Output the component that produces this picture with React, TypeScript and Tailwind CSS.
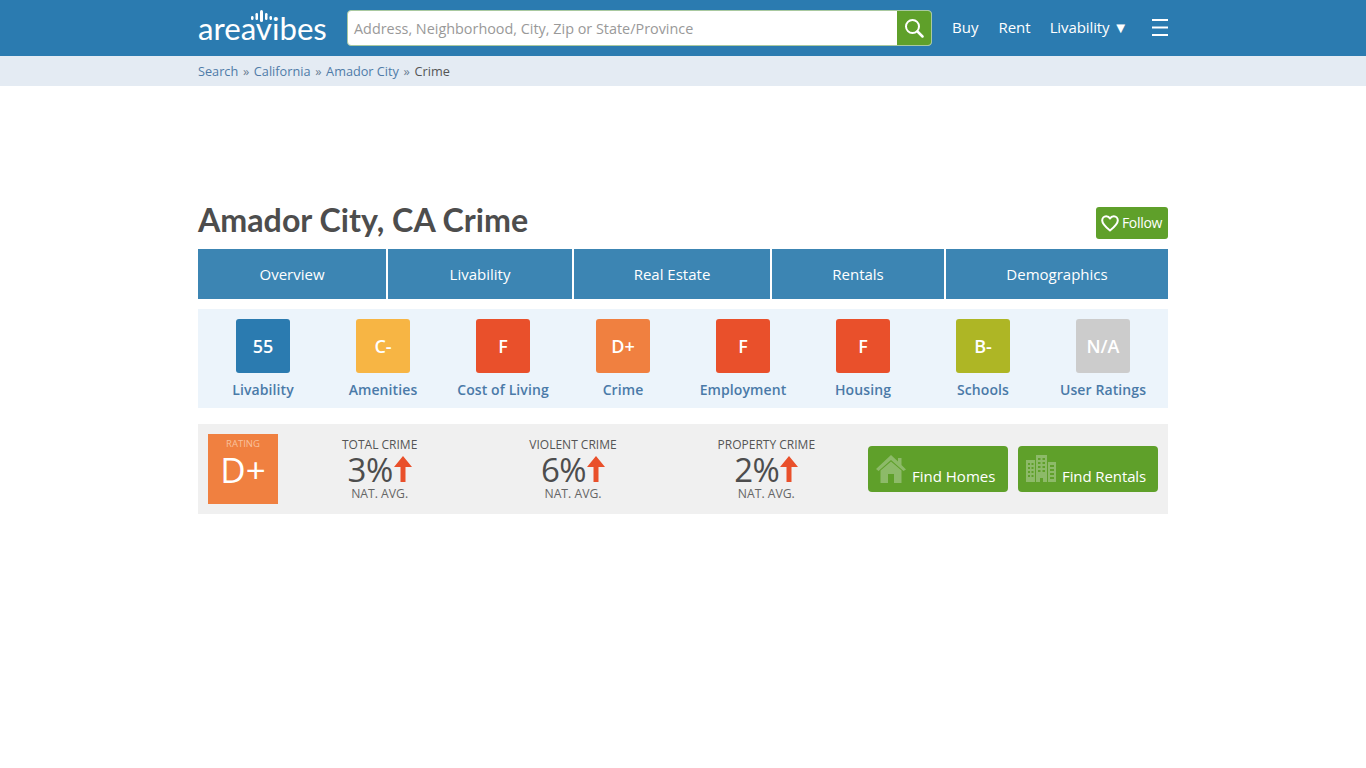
const tabs = [
  { label: "Overview", width: "w-[188px]" },
  { label: "Livability", width: "w-[184px]" },
  { label: "Real Estate", width: "w-[196px]" },
  { label: "Rentals", width: "w-[172px]" },
  { label: "Demographics", width: "flex-1" },
]

const grades = [
  { grade: "55", label: "Livability", color: "bg-[#2b7bb0]" },
  { grade: "C-", label: "Amenities", color: "bg-[#f7b544]" },
  { grade: "F", label: "Cost of Living", color: "bg-[#e9502b]" },
  { grade: "D+", label: "Crime", color: "bg-[#f08040]" },
  { grade: "F", label: "Employment", color: "bg-[#e9502b]" },
  { grade: "F", label: "Housing", color: "bg-[#e9502b]" },
  { grade: "B-", label: "Schools", color: "bg-[#aeb625]" },
  { grade: "N/A", label: "User Ratings", color: "bg-[#cccccc]" },
]

const stats = [
  { label: "TOTAL CRIME", value: "3%" },
  { label: "VIOLENT CRIME", value: "6%" },
  { label: "PROPERTY CRIME", value: "2%" },
]

function UpArrow() {
  return (
    <svg width="18" height="26" viewBox="0 0 18 26" className="ml-[1px] fill-[#e9502b]">
      <path d="M9 0 L18 11 L11.500 11 L11.500 26 L6.500 26 L6.500 11 L0 11 Z" />
    </svg>
  )
}

function HomeIcon() {
  return (
    <svg width="30" height="30" viewBox="0 0 30 30" className="fill-[#8dba69]">
      <path d="M15 1 L22 7.500 L22 4 L25.500 4 L25.500 11 L30 15.500 L27.500 17 L15 6 L2.500 17 L0 15 Z" />
      <path d="M4.500 16.500 L15 7.500 L25.500 16.500 L25.500 29 L18 29 L18 20 L12 20 L12 29 L4.500 29 Z" />
    </svg>
  )
}

function BuildingIcon() {
  return (
    <svg width="30" height="30" viewBox="0 0 30 30" className="fill-[#8dba69]">
      <path
        fillRule="evenodd"
        d="M0 6 H9 V28 H0 Z M2 9 V11 H4 V9 Z M5.500 9 V11 H7.500 V9 Z M2 13 V15 H4 V13 Z M5.500 13 V15 H7.500 V13 Z M2 17 V19 H4 V17 Z M5.500 17 V19 H7.500 V17 Z M2 21 V23 H4 V21 Z M5.500 21 V23 H7.500 V21 Z"
      />
      <path
        fillRule="evenodd"
        d="M10 1 H21 V28 H17 V24 H14 V28 H10 Z M12 4 V6 H14.500 V4 Z M16.500 4 V6 H19 V4 Z M12 8 V10 H14.500 V8 Z M16.500 8 V10 H19 V8 Z M12 12 V14 H14.500 V12 Z M16.500 12 V14 H19 V12 Z M12 16 V18 H14.500 V16 Z M16.500 16 V18 H19 V16 Z"
      />
      <path
        fillRule="evenodd"
        d="M22 8 H30 V28 H22 Z M24 11 V13 H28 V11 Z M24 15 V17 H28 V15 Z M24 19 V21 H28 V19 Z M24 23 V25 H28 V23 Z"
      />
    </svg>
  )
}

function Logo() {
  return (
    <div className="relative w-[130px] h-[56px] shrink-0">
      {/* sound-wave marks over the v */}
      <svg width="30" height="16" viewBox="0 0 30 16" className="absolute left-[49px] top-[9px] fill-white">
        <rect x="4" y="7" width="2.500" height="4" rx="1.200" />
        <rect x="8.500" y="4" width="2.500" height="7" rx="1.200" />
        <rect x="13" y="1" width="3" height="12" rx="1.500" />
        <rect x="18" y="4" width="2.500" height="7" rx="1.200" />
        <rect x="22.500" y="7" width="2.500" height="4" rx="1.200" />
      </svg>
      <span className="absolute left-0 top-[9px] text-[31.200px] leading-[38px] font-['Lato',sans-serif] text-white">
        areavibes
      </span>
    </div>
  )
}

export default function App() {
  return (
    <div className="min-h-[768px] bg-white font-['Open_Sans',sans-serif] text-[#4d4d4d]">
      <header className="h-14 bg-[#2b7bb0]">
        <div className="w-[970px] mx-auto h-full flex items-center">
          <Logo />
          <div className="ml-[19px] w-[585px] h-9 flex rounded-[4px] bg-white border border-[#a9c9a0] overflow-hidden">
            <div className="flex-1 px-[6px] pt-[1px] flex items-center text-[14.4px] text-[#999999]">
              Address, Neighborhood, City, Zip or State/Province
            </div>
            <div className="w-[34px] bg-[#5fa02a] flex items-center justify-center">
              <svg width="20" height="20" viewBox="0 0 20 20" fill="none" stroke="white" strokeWidth="2" strokeLinecap="round">
                <circle cx="8.500" cy="8.500" r="6.500" />
                <path d="M13.500 13.500 L18.500 18.500" strokeWidth="2.500" />
              </svg>
            </div>
          </div>
          <nav className="ml-[20px] -mt-[1px] flex items-center text-white text-[15px]">
            <span>Buy</span>
            <span className="ml-[20px]">Rent</span>
            <span className="ml-[19px] tracking-[-0.1px]">Livability ▼</span>
          </nav>
          <svg width="16" height="18" viewBox="0 0 16 18" className="ml-auto fill-white">
            <rect x="0" y="0" width="16" height="2" />
            <rect x="0" y="7.500" width="16" height="2" />
            <rect x="0" y="15" width="16" height="2" />
          </svg>
        </div>
      </header>

      <div className="h-[30px] bg-[#e4ebf3]">
        <div className="w-[970px] mx-auto h-full pt-[1px] flex items-center gap-[4.700px] text-[12.700px] text-[#4f7ba8]">
          <span>Search</span>
          <span className="text-[#6b7f94]">»</span>
          <span>California</span>
          <span className="text-[#6b7f94]">»</span>
          <span>Amador City</span>
          <span className="text-[#6b7f94]">»</span>
          <span className="text-[#555555]">Crime</span>
        </div>
      </div>

      <main className="w-[970px] mx-auto pt-[112px]">
        <div className="flex items-start justify-between h-[51px]">
          <h1 className="font-['Lato',sans-serif] font-bold text-[32.200px] leading-[44px] text-[#4d4d4d]">
            Amador City, CA Crime
          </h1>
          <button className="mt-[9px] h-8 w-[72px] pr-[1px] rounded-[3px] bg-[#5fa02a] text-white text-[14px] leading-[20px] flex items-center justify-center gap-[3px] tracking-[-0.3px]">
            <svg width="18" height="17" viewBox="0 0 18 17" fill="none" stroke="white" strokeWidth="2" strokeLinejoin="round">
              <path d="M9 15.500 C4 11.500 1.200 9 1.200 5.500 C1.200 3 3 1.200 5.200 1.200 C6.800 1.200 8.200 2 9 3.500 C9.800 2 11.200 1.200 12.800 1.200 C15 1.200 16.800 3 16.800 5.500 C16.800 9 14 11.500 9 15.500 Z" />
            </svg>
            <span className="-mt-[1px]">Follow</span>
          </button>
        </div>

        <div className="flex gap-0.5">
          {tabs.map((tab) => (
            <div
              key={tab.label}
              className={`${tab.width} h-[50px] bg-[#3c85b3] text-white text-[15px] flex items-center justify-center`}
            >
              {tab.label}
            </div>
          ))}
        </div>

        <div className="mt-[10px] h-[99px] bg-[#ecf4fb] px-[5px] pt-[10px] grid grid-cols-8">
          {grades.map((item) => (
            <div key={item.label} className="flex flex-col items-center">
              <div
                className={`${item.color} w-[54px] h-[54px] rounded-[3px] flex items-center justify-center text-white font-semibold text-[18px]`}
              >
                {item.grade}
              </div>
              <div className="mt-[6px] text-[14px] tracking-[0.1px] font-semibold text-[#4a7aa8]">{item.label}</div>
            </div>
          ))}
        </div>

        <div className="mt-4 h-[90px] bg-[#f0f0f0] px-[10px] flex items-center">
          <div className="w-[70px] h-[70px] bg-[#f08040] text-white flex flex-col items-center shrink-0">
            <span className="mt-[4px] text-[9.500px] leading-[12px] text-[#f9c09d]">RATING</span>
            <span className="text-[35px] leading-[40px]">D+</span>
          </div>
          <div className="ml-[5px] w-[580px] grid grid-cols-3">
            {stats.map((stat) => (
              <div key={stat.label} className="flex flex-col items-center text-[#555555]">
                <div className="text-[12px] leading-[16px]">{stat.label}</div>
                <div className="flex items-center h-[33px] text-[33px] leading-[33px] tracking-[-0.5px] text-[#4d4d4d]">
                  {stat.value}
                  <UpArrow />
                </div>
                <div className="text-[12.200px] leading-[16px] text-[#666666]">NAT. AVG.</div>
              </div>
            ))}
          </div>
          <div className="ml-[5px] flex gap-[10px]">
            <div className="relative w-[140px] h-[46px] rounded-[4px] bg-[#5fa02a] text-white text-[15px]">
              <span className="absolute left-[8px] top-[8px]">
                <HomeIcon />
              </span>
              <span className="absolute left-[44px] top-[20px] leading-[20px]">Find Homes</span>
            </div>
            <div className="relative w-[140px] h-[46px] rounded-[4px] bg-[#5fa02a] text-white text-[15px]">
              <span className="absolute left-[8px] top-[8px]">
                <BuildingIcon />
              </span>
              <span className="absolute left-[44px] top-[20px] leading-[20px] tracking-[-0.1px]">Find Rentals</span>
            </div>
          </div>
        </div>
      </main>
    </div>
  )
}
